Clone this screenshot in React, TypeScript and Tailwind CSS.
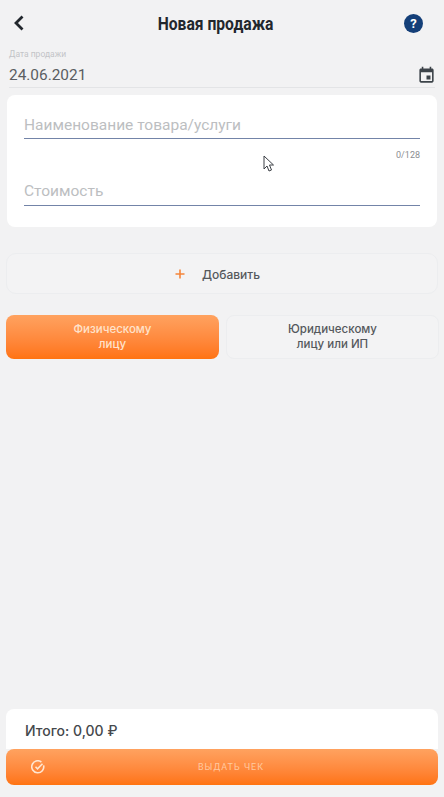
export default function App() {
  return (
    <div className="relative flex h-[797px] w-[444px] flex-col overflow-hidden bg-[#f2f2f3] font-['Roboto',sans-serif]">
      {/* Header */}
      <header className="flex h-[47px] shrink-0 items-center justify-between pl-[13px] pr-[21px]">
        <svg width="12" height="16" viewBox="0 0 12 16" fill="none" className="mb-[1px]">
          <path d="M9.5 1.500 L3 8 L9.5 14.500" stroke="#22272d" strokeWidth="2.8" />
        </svg>
        <h1 className="ml-[2px] scale-x-[0.87] text-[18px] font-bold leading-none text-[#22272d]">Новая продажа</h1>
        <div className="flex h-[19px] w-[19px] items-center justify-center rounded-full bg-[#143f78] text-[13px] font-bold leading-none text-white">?</div>
      </header>

      {/* Date */}
      <div className="mx-[9px] flex h-[41px] shrink-0 flex-col border-b border-[#e3e4e6]">
        <span className="text-[8.5px] leading-[14px] text-[#c2c4c7]">Дата продажи</span>
        <div className="mt-[3px] flex items-center justify-between">
          <span className="text-[15.400px] leading-[22px] text-[#5b5e62]">24.06.2021</span>
          <svg width="19" height="19" viewBox="0 0 24 24" fill="#3c4349" className="mr-[-1px]">
            <path d="M17 12h-5v5h5v-5zM16 1v2H8V1H6v2H5c-1.110 0-1.990.9-1.990 2L3 19c0 1.100.89 2 2 2h14c1.100 0 2-.9 2-2V5c0-1.100-.9-2-2-2h-1V1h-2zm3 18H5V8h14v11z" />
          </svg>
        </div>
      </div>

      {/* Form card */}
      <section className="mx-[7px] mt-[7px] flex h-[132px] shrink-0 flex-col rounded-[8px] bg-white px-[17px]">
        <div className="mt-[17px] flex h-[27px] items-center border-b border-[#7384a8] pt-[1px] text-[15.500px] text-[#bcbec1]">Наименование товара/услуги</div>
        <div className="mt-[11px] text-right text-[9px] leading-[11px] text-[#8b8e92]">0/128</div>
        <div className="mt-[17px] flex h-[28px] items-center border-b border-[#7384a8] pt-[1px] text-[15.500px] text-[#bcbec1]">Стоимость</div>
      </section>

      {/* Add button */}
      <button className="mx-[6px] mt-[26px] flex h-[41px] shrink-0 items-center justify-center gap-[17px] rounded-[10px] border border-[#ecedef] bg-[#f3f3f4] pr-[9px] pt-[3px] font-['Inter',sans-serif] text-[12px] font-medium text-[#55585c]">
        <svg width="10" height="10" viewBox="0 0 10 10" fill="none" className="mb-[3px]">
          <path d="M5 .5v9M.5 5h9" stroke="#f5853a" strokeWidth="1.600" />
        </svg>
        Добавить
      </button>

      {/* Buyer type */}
      <div className="mx-[6px] mt-[21px] grid h-[44px] shrink-0 grid-cols-[213px_213px] gap-[7px] font-['Inter',sans-serif] text-[11.500px] font-medium leading-[15px]">
        <button className="rounded-[8px] bg-gradient-to-b from-[#ffa25f] to-[#ff730f] text-[#ffe3cc]">
          Физическому<br />лицу
        </button>
        <button className="rounded-[8px] border border-[#ecedef] bg-[#f3f3f4] text-[#55585c]">
          Юридическому<br />лицу или ИП
        </button>
      </div>

      {/* Footer */}
      <div className="mx-[6px] mb-[12px] mt-auto flex shrink-0 flex-col">
        <div className="flex h-[40px] items-center rounded-t-[8px] bg-white px-[19px] pt-[2px] font-['Inter',sans-serif] text-[14px] font-medium text-[#45484c]">Итого: 0,00 ₽</div>
        <button className="relative flex h-[36px] items-center justify-center rounded-[8px] bg-gradient-to-b from-[#ffa25f] to-[#ff730f] pl-[18px] pt-[2px] text-[9px] tracking-[1px] text-[#ffc9a0]">
          <svg width="14" height="14" viewBox="0 0 14 14" fill="none" className="absolute left-[25px] top-[11px]">
            <path d="M12.600 5.400A6 6 0 1 1 10.400 2" stroke="#ffe6d2" strokeWidth="1.600" />
            <path d="M4.500 6.800l2 2 5-5" stroke="#ffe6d2" strokeWidth="1.600" />
          </svg>
          ВЫДАТЬ ЧЕК
        </button>
      </div>

      {/* Mouse cursor overlay */}
      <svg width="12" height="18" viewBox="0 0 12 18" className="absolute left-[263px] top-[155px]">
        <path d="M1 1v13l3-3 2 5 2.500-1-2-5h4z" fill="#fff" stroke="#3c4046" strokeWidth="1" />
      </svg>
    </div>
  );
}
